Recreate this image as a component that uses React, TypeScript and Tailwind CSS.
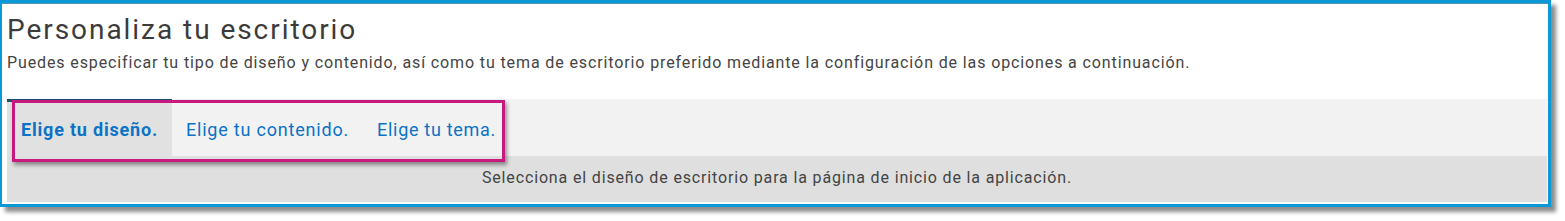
import React from "react";

export default function App() {
  return (
    <div className="w-[1565px] h-[221px] bg-white" style={{ fontFamily: "Roboto, 'Liberation Sans', sans-serif" }}>
      <div className="relative w-[1551px] h-[207px] border-t-[3px] border-l-2 border-r-[3px] border-b-[3px] border-[#0a99d7] shadow-[5px_5px_4px_rgba(0,0,0,0.45)] bg-white">
        <div className="h-px bg-[#0b6a9c] opacity-70" />
        <div className="pl-[5px] pr-[1px] flex flex-col">
          <h1 className="pt-[9px] text-[28px] leading-[33px] tracking-[1.95px] text-[#3b3b3b] font-normal">Personaliza tu escritorio</h1>
          <p className="mt-[7px] text-[16px] leading-[19px] tracking-[0.88px] text-[#444444]">
            Puedes especificar tu tipo de diseño y contenido, así como tu tema de escritorio preferido mediante la configuración de las opciones a continuación.
          </p>
          <div className="mt-[27px] h-[57px] bg-[#f2f2f2] flex items-stretch">
            <div className="border-t-[3px] border-[#1d4f73] bg-[#e1e1e1] px-[14px] flex items-center text-[18px] tracking-[0.8px] font-bold text-[#0b72c6]">
              Elige tu diseño.
            </div>
            <div className="px-[14px] flex items-center text-[18px] tracking-[0.8px] text-[#0b72c6] pt-[3px]">Elige tu contenido.</div>
            <div className="px-[14px] flex items-center text-[18px] tracking-[0.7px] text-[#0b72c6] pt-[3px]">Elige tu tema.</div>
          </div>
          <div className="h-[46px] bg-[#dfdfdf] pt-[12px] text-center text-[16px] leading-[19px] tracking-[0.85px] text-[#444444]">
            Selecciona el diseño de escritorio para la página de inicio de la aplicación.
          </div>
        </div>
        <div className="absolute left-[10px] top-[97px] w-[493px] h-[62px] border-[3px] border-[#c8197f] shadow-[2px_3px_4px_rgba(0,0,0,0.4)]" />
      </div>
    </div>
  );
}
